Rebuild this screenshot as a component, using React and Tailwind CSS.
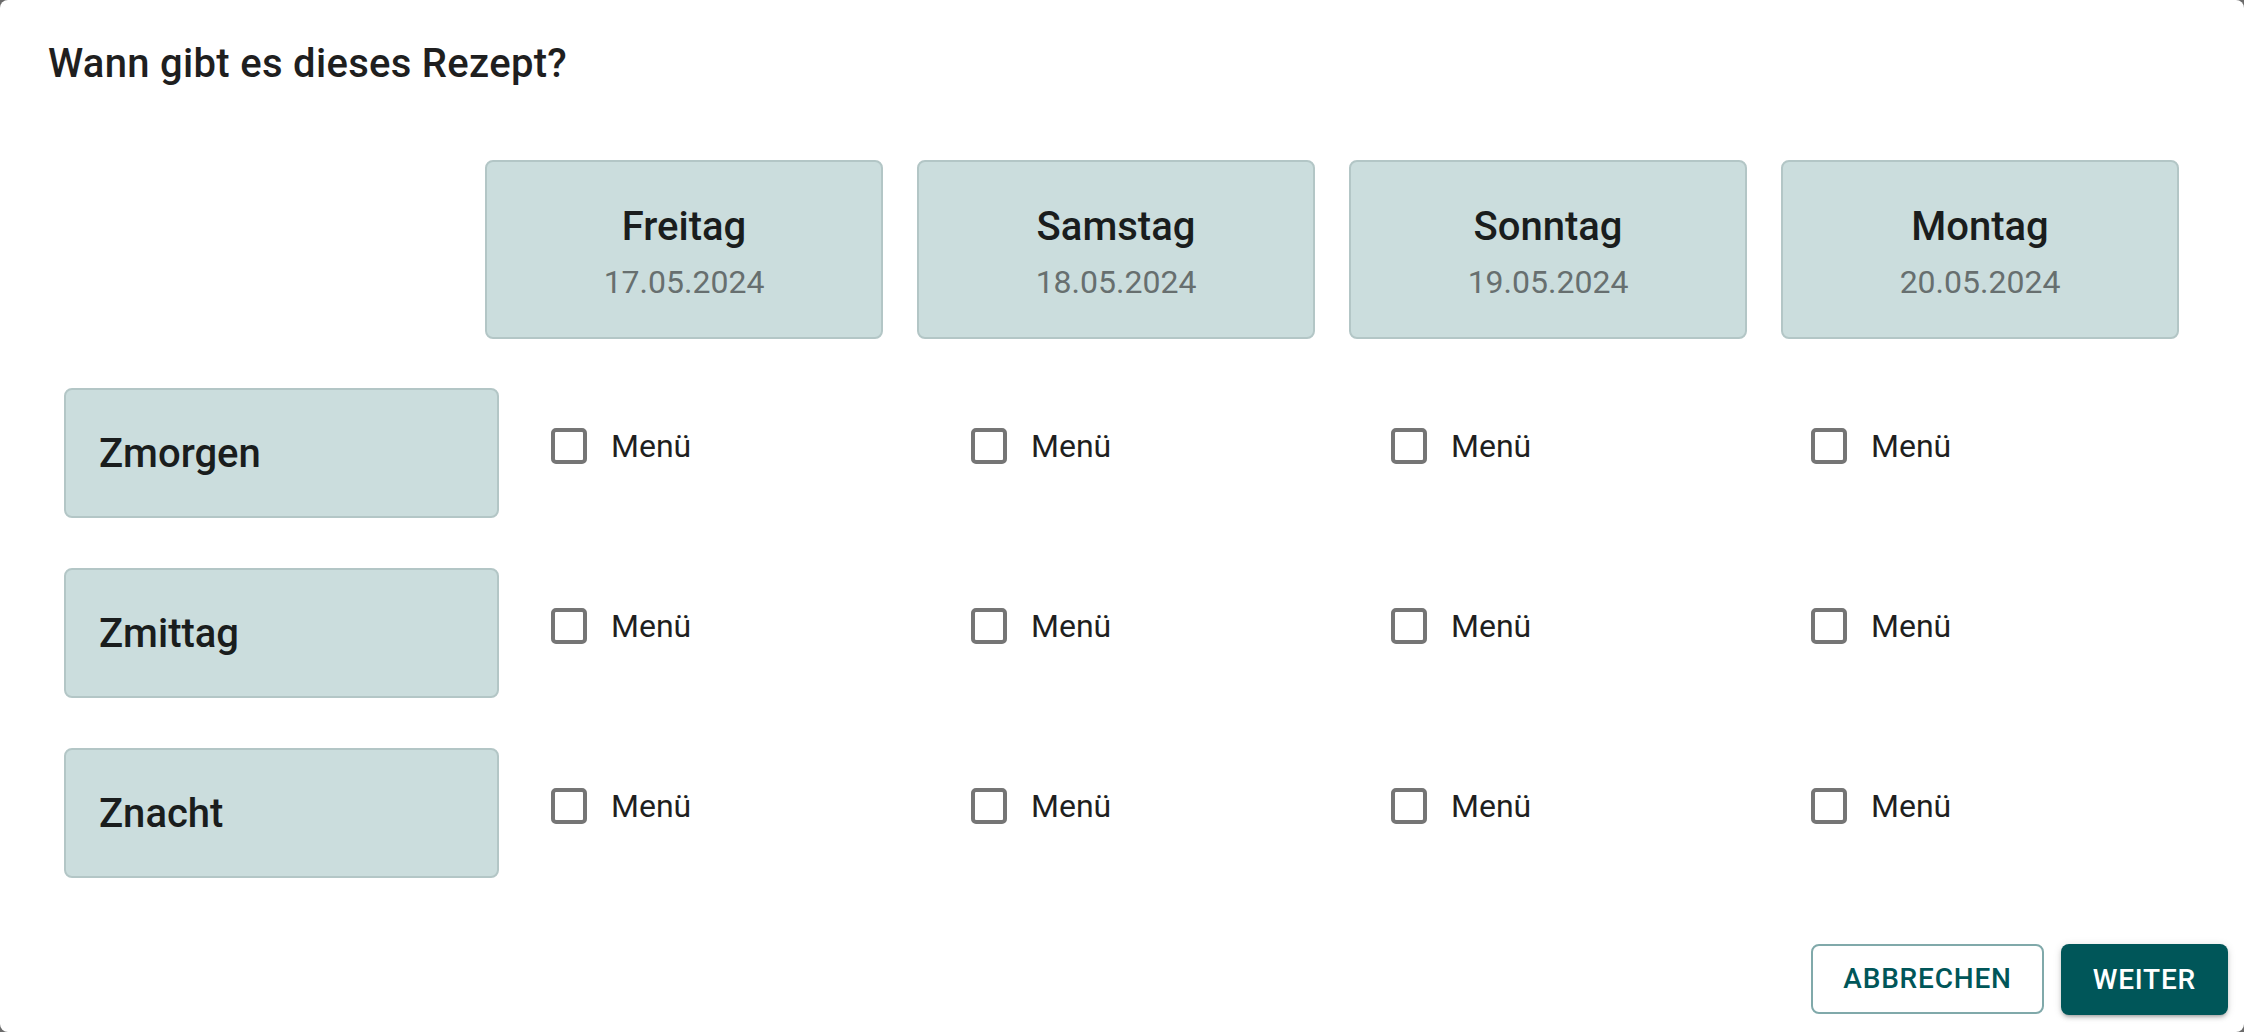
import React from "react";

const days = [
  { name: "Freitag", date: "17.05.2024" },
  { name: "Samstag", date: "18.05.2024" },
  { name: "Sonntag", date: "19.05.2024" },
  { name: "Montag", date: "20.05.2024" },
];

const meals = ["Zmorgen", "Zmittag", "Znacht"];

function Check() {
  return (
    <label className="flex items-center gap-[24px] h-[36px]">
      <span className="w-[36px] h-[36px] rounded-[5px] border-[4px] border-[#757575] bg-white shrink-0" />
      <span className="text-[32px] leading-[36px] text-[#1f1f1f]">Menü</span>
    </label>
  );
}

export default function App() {
  return (
    <div
      className="w-[2244px] h-[1032px] bg-[#6b6b6b]"
      style={{ fontFamily: "Roboto, 'Noto Sans', sans-serif" }}
    >
      <div className="w-full h-full bg-white rounded-[8px] flex flex-col">
        <h2 className="px-[48px] pt-[32px] pb-[32px] text-[40px] leading-[64px] font-medium tracking-[0.3px] text-[#1f1f1f]">
          Wann gibt es dieses Rezept?
        </h2>

        <div className="flex gap-[34px] pl-[485px] mt-[32px]">
          {days.map((d) => (
            <div
              key={d.name}
              className="w-[398px] h-[179px] rounded-[8px] border-2 border-[#b3c6c6] bg-[#cbdddd] flex flex-col items-center pt-[41px]"
            >
              <div className="text-[40px] leading-[48px] font-medium text-[#1a1d1d]">
                {d.name}
              </div>
              <div className="text-[32px] leading-[40px] text-[#676f6f] mt-[11px]">
                {d.date}
              </div>
            </div>
          ))}
        </div>

        <div className="flex flex-col gap-[50px] mt-[49px] pl-[64px]">
          {meals.map((m) => (
            <div key={m} className="flex items-start">
              <div className="w-[435px] h-[130px] rounded-[8px] border-2 border-[#b3c6c6] bg-[#cbdddd] flex items-center pl-[33px]">
                <span className="text-[40px] leading-[48px] font-medium text-[#1a1d1d] mt-[2px]">{m}</span>
              </div>
              <div className="flex pl-[52px] pt-[40px]">
                {days.map((d) => (
                  <div key={d.name} className="w-[420px]">
                    <Check />
                  </div>
                ))}
              </div>
            </div>
          ))}
        </div>

        <div className="mt-auto flex justify-end gap-[17px] pr-[16px] pb-[17px]">
          <button className="h-[70px] px-[30px] rounded-[8px] border-2 border-[#80a9aa] bg-white text-[28px] font-medium tracking-[0.8px] text-[#005659] uppercase">
            Abbrechen
          </button>
          <button className="h-[71px] px-[32px] rounded-[8px] bg-[#005659] text-[28px] font-medium tracking-[0.8px] text-white uppercase shadow-[0_3px_3px_-2px_rgba(0,0,0,0.2),0_3px_4px_0_rgba(0,0,0,0.14),0_1px_8px_0_rgba(0,0,0,0.12)]">
            Weiter
          </button>
        </div>
      </div>
    </div>
  );
}
